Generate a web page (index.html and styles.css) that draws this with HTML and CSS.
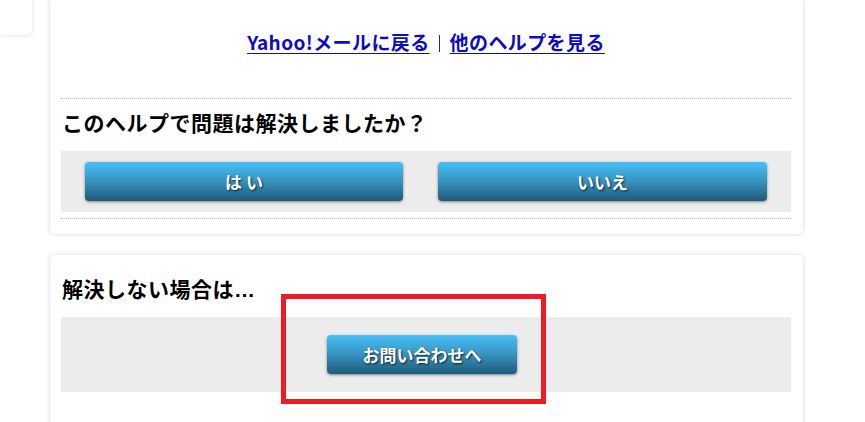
FILE: index.html
```html
<!DOCTYPE html>
<html lang="ja">
<head>
<meta charset="utf-8">
<title>ヘルプ</title>
<link rel="stylesheet" href="styles.css">
</head>
<body>
<div class="page">
  <aside class="side">
    <div class="side-card"></div>
  </aside>
  <main class="main">
    <section class="card card-top">
      <p class="links"><a href="#">Yahoo!メールに戻る</a><span class="sep"></span><a href="#">他のヘルプを見る</a></p>
      <div class="feedback">
        <h2 class="title">このヘルプで問題は解決しましたか？</h2>
        <div class="box vote">
          <a class="btn btn-yes" href="#">は い</a>
          <a class="btn btn-no" href="#">いいえ</a>
        </div>
      </div>
    </section>
    <section class="card card-contact">
      <h2 class="title">解決しない場合は<span class="ellipsis">…</span></h2>
      <div class="box contact">
        <a class="btn btn-contact" href="#">お問い合わせへ</a>
      </div>
      <div class="highlight"></div>
    </section>
  </main>
</div>
</body>
</html>
```
FILE: styles.css
```css
html, body {
  margin: 0;
  padding: 0;
  background: #fff;
}
body {
  font-family: "Noto Sans CJK JP", "Noto Sans", sans-serif;
  color: #000;
  overflow: hidden;
}
.page {
  display: flex;
  gap: 18px;
  align-items: flex-start;
}
.side {
  width: 32px;
  flex: none;
}
.side-card {
  height: 35px;
  background: #fff;
  border-radius: 0 0 5px 0;
  box-shadow: 0 0 5px rgba(0, 0, 0, 0.14);
}
.main {
  width: 753px;
  flex: none;
}
.card {
  background: #fff;
  box-shadow: 0 0 5px rgba(0, 0, 0, 0.16);
  padding: 0 12px 0 11px;
}
.card-top {
  border-radius: 0 0 5px 5px;
  padding-bottom: 15px;
}
.links {
  margin: 0;
  padding: 28px 0 42px;
  line-height: 28px;
  text-align: center;
  font-size: 19px;
  font-weight: bold;
  letter-spacing: 0.4px;
  display: flex;
  justify-content: center;
  align-items: center;
}
.links a {
  color: #0c0cc8;
  text-decoration: underline;
  text-underline-offset: 3px;
  text-decoration-thickness: 1px;
}
.sep {
  display: inline-block;
  width: 0;
  height: 17px;
  border-left: 1px solid #333;
  margin: 2px 10px 0 9px;
}
.feedback {
  border-top: 1px dotted #b8b8b8;
  border-bottom: 1px dotted #b8b8b8;
  padding-bottom: 6px;
}
.title {
  margin: 8px 0 14px 1px;
  font-size: 21px;
  line-height: 30px;
  height: 30px;
  font-weight: bold;
  letter-spacing: 0.5px;
}
.ellipsis {
  font-family: "Liberation Sans", sans-serif;
  letter-spacing: 0;
  line-height: 0;
}
.box {
  background: #ececec;
}
.vote {
  display: grid;
  grid-template-columns: 318px 329px;
  justify-content: space-between;
  padding: 11px 24px;
}
.btn {
  display: flex;
  align-items: center;
  justify-content: center;
  height: 39px;
  border-radius: 4px;
  background: linear-gradient(to bottom, #48c0f6 0%, #3898c6 45%, #1f5a79 100%);
  box-shadow: 0 1px 3px rgba(0, 0, 0, 0.45);
  color: #fff;
  font-size: 17px;
  font-weight: bold;
  text-decoration: none;
  text-shadow: 1px 1px 2px rgba(0, 0, 0, 0.75);
  box-sizing: border-box;
}
.card-contact {
  margin-top: 21px;
  border-radius: 5px 5px 0 0;
  padding-top: 18px;
  padding-bottom: 60px;
  position: relative;
}
.card-contact .title {
  margin-top: 0;
}
.contact {
  display: flex;
  justify-content: center;
  padding: 18px 8px 18px 0;
}
.btn-contact {
  width: 190px;
}
.highlight {
  position: absolute;
  left: 231px;
  top: 39px;
  width: 265px;
  height: 110px;
  border: 5px solid #ed1c24;
  box-sizing: border-box;
  pointer-events: none;
}
```
